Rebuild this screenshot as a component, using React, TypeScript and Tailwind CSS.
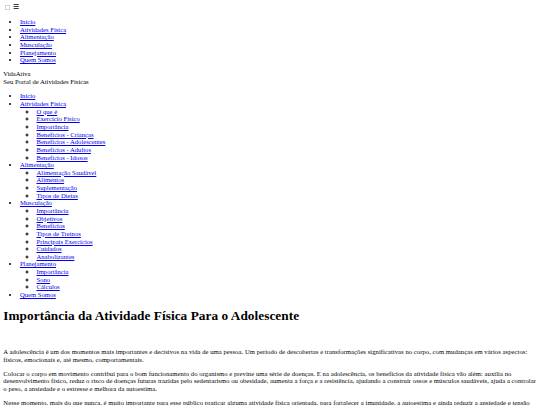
import React from "react";

const topLinks = ["Início", "Atividades Física", "Alimentação", "Musculação", "Planejamento", "Quem Somos"];

const menu: { label: string; sub?: string[] }[] = [
  { label: "Início" },
  {
    label: "Atividades Física",
    sub: [
      "O que é",
      "Exercício Físico",
      "Importância",
      "Benefícios - Crianças",
      "Benefícios - Adolescentes",
      "Benefícios - Adultos",
      "Benefícios - Idosos",
    ],
  },
  { label: "Alimentação", sub: ["Alimentação Saudável", "Alimentos", "Suplementação", "Tipos de Dietas"] },
  {
    label: "Musculação",
    sub: ["Importância", "Objetivos", "Benefícios", "Tipos de Treinos", "Principais Exercícios", "Cuidados", "Anabolizantes"],
  },
  { label: "Planejamento", sub: ["Importância", "Sono", "Cálculos"] },
  { label: "Quem Somos" },
];

const Link = ({ children }: { children: React.ReactNode }) => (
  <a href="#" className="text-[#0000ee] underline">
    {children}
  </a>
);

export default function App() {
  return (
    <div className="[zoom:0.415] bg-white text-black text-[16px] leading-[18.4px] font-['Liberation_Serif','Times_New_Roman',serif]">
      <div className="m-[8px]">
        <header>
          <div>
            <input type="checkbox" id="menu" className="m-[3px_3px_3px_4px] align-[-2px]" />{" "}
            <label htmlFor="menu">☰</label>
          </div>
          <ul className="list-disc pl-[40px] my-[16px]">
            {topLinks.map((l) => (
              <li key={l}>
                <Link>{l}</Link>
              </li>
            ))}
          </ul>
          <div>
            <div>VidaAtiva</div>
            <div>Seu Portal de Atividades Físicas</div>
          </div>
          <nav>
            <ul className="list-disc pl-[40px] my-[16px]">
              {menu.map((m) => (
                <li key={m.label}>
                  <Link>{m.label}</Link>
                  {m.sub && (
                    <ul className="list-[circle] pl-[40px]">
                      {m.sub.map((s) => (
                        <li key={s}>
                          <Link>{s}</Link>
                        </li>
                      ))}
                    </ul>
                  )}
                </li>
              ))}
            </ul>
          </nav>
        </header>
        <main className="tracking-[0.12px]">
          <h1 className="text-[32px] leading-[36.8px] font-bold my-[21.44px]">
            Importância da Atividade Física Para o Adolescente
          </h1>
          <div className="h-[23px]" />
          <p className="my-[16px]">
            A adolescência é um dos momentos mais importantes e decisivos na vida de uma pessoa. Um período de descobertas e
            transformações significativas no corpo, com mudanças em vários aspectos: físicos, emocionais e, até mesmo,
            comportamentais.
          </p>
          <p className="my-[16px]">
            Colocar o corpo em movimento contribui para o bom funcionamento do organismo e previne uma série de doenças. E na
            adolescência, os benefícios da atividade física vão além: auxilia no desenvolvimento físico, reduz o risco de doenças
            futuras trazidas pelo sedentarismo ou obesidade, aumenta a força e a resistência, ajudando a construir ossos e
            músculos saudáveis, ajuda a controlar o peso, a ansiedade e o estresse e melhora da autoestima.
          </p>
          <p className="my-[16px]">
            Nesse momento, mais do que nunca, é muito importante para esse público praticar alguma atividade física orientada,
            para fortalecer a imunidade, a autoestima e ainda reduzir a ansiedade e tensão do dia a dia, melhorando também a
            qualidade do sono e o rendimento escolar.
          </p>
        </main>
      </div>
    </div>
  );
}
